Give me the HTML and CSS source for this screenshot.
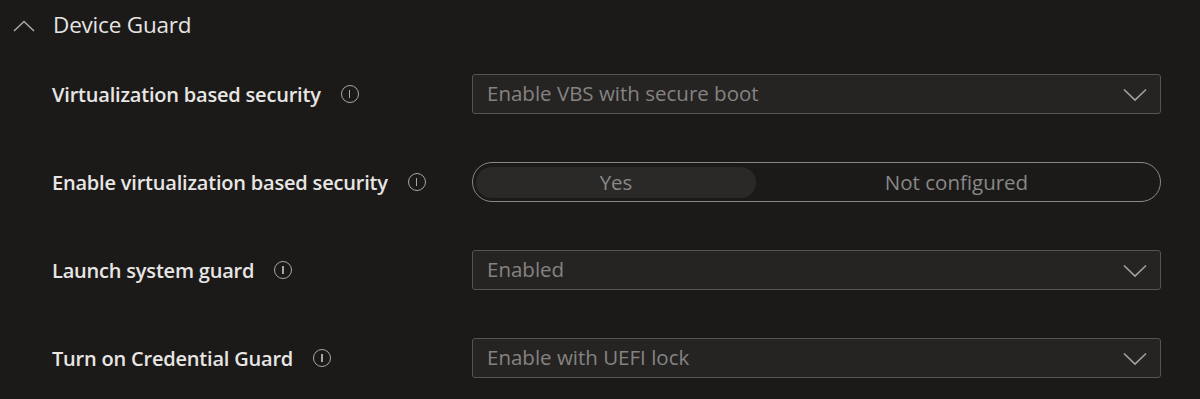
FILE: index.html
```html
<!DOCTYPE html>
<html lang="en">
<head>
    <meta charset="UTF-8">
    <title>Device Guard</title>
    <meta name="viewport" content="width=device-width, initial-scale=1.0">
    <link rel="stylesheet" href="styles.css">
</head>
<body>
    <div class="section">
        <div class="section-head">
            <svg class="chevron-up" width="22" height="12" viewBox="0 0 22 12">
                <path d="M1 11 L11 1.5 L21 11" fill="none" stroke="#a8a6a4" stroke-width="1.6"/>
            </svg>
            <span class="section-title">Device Guard</span>
        </div>

        <div class="settings">
            <div class="row">
                <div class="label">Virtualization based security <span class="info"></span></div>
                <div class="select">
                    <span>Enable VBS with secure boot</span>
                    <svg class="chevron-down" width="24" height="14" viewBox="0 0 24 14">
                        <path d="M1 1.5 L12 12 L23 1.5" fill="none" stroke="#a19f9d" stroke-width="1.7"/>
                    </svg>
                </div>
            </div>

            <div class="row">
                <div class="label">Enable virtualization based security <span class="info"></span></div>
                <div class="toggle">
                    <span class="opt opt-on">Yes</span>
                    <span class="opt opt-off">Not configured</span>
                </div>
            </div>

            <div class="row">
                <div class="label">Launch system guard <span class="info"></span></div>
                <div class="select">
                    <span>Enabled</span>
                    <svg class="chevron-down" width="24" height="14" viewBox="0 0 24 14">
                        <path d="M1 1.5 L12 12 L23 1.5" fill="none" stroke="#a19f9d" stroke-width="1.7"/>
                    </svg>
                </div>
            </div>

            <div class="row">
                <div class="label">Turn on Credential Guard <span class="info"></span></div>
                <div class="select">
                    <span>Enable with UEFI lock</span>
                    <svg class="chevron-down" width="24" height="14" viewBox="0 0 24 14">
                        <path d="M1 1.5 L12 12 L23 1.5" fill="none" stroke="#a19f9d" stroke-width="1.7"/>
                    </svg>
                </div>
            </div>
        </div>
    </div>
</body>
</html>
```

FILE: styles.css
```css
body {
    margin: 0;
    background-color: #1b1a19;
    font-family: "Open Sans", "Noto Sans", Arial, sans-serif;
    height: 399px;
    overflow: hidden;
}
.section {
    padding: 8px 39px 0 13px;
}
.section-head {
    display: flex;
    align-items: center;
    height: 32px;
}
.chevron-up {
    margin-top: 3px;
    margin-right: 18px;
}
.section-title {
    color: #e6e4e2;
    font-size: 22.5px;
    letter-spacing: -0.2px;
}

.settings {
    display: flex;
    flex-direction: column;
    gap: 48px;
    margin-top: 34px;
    padding-left: 39px;
}
.row {
    display: grid;
    grid-template-columns: 420px 1fr;
    align-items: center;
    height: 40px;
}
.label {
    display: flex;
    align-items: center;
    color: #e8e6e4;
    font-size: 20px;
    font-weight: 600;
    letter-spacing: -0.2px;
}
.info {
    position: relative;
    display: inline-block;
    width: 16px;
    height: 16px;
    margin-left: 20px;
    border: 1.5px solid #a8a6a4;
    border-radius: 50%;
}
.info::after {
    content: "";
    position: absolute;
    left: 7px;
    top: 4px;
    width: 1.6px;
    height: 8px;
    background-color: #a8a6a4;
}

.select {
    display: flex;
    align-items: center;
    justify-content: space-between;
    height: 40px;
    box-sizing: border-box;
    padding: 0 13px 0 14px;
    background-color: #252423;
    border: 1.5px solid #565453;
    border-radius: 3px;
    color: #858381;
    font-size: 20.5px;
}
.select span {
    margin-top: -3px;
}
.chevron-down {
    margin-top: 2px;
}

.toggle {
    display: flex;
    align-items: center;
    height: 40px;
    box-sizing: border-box;
    padding: 0 3px;
    border: 1.6px solid #8a8886;
    border-radius: 20px;
    color: #8a8886;
    font-size: 20.5px;
}
.opt {
    display: flex;
    align-items: center;
    justify-content: center;
    height: 31px;
    border-radius: 16px;
}
.opt-on {
    width: 280px;
    background-color: #2a2928;
}
.opt-off {
    flex: 1;
}
```
